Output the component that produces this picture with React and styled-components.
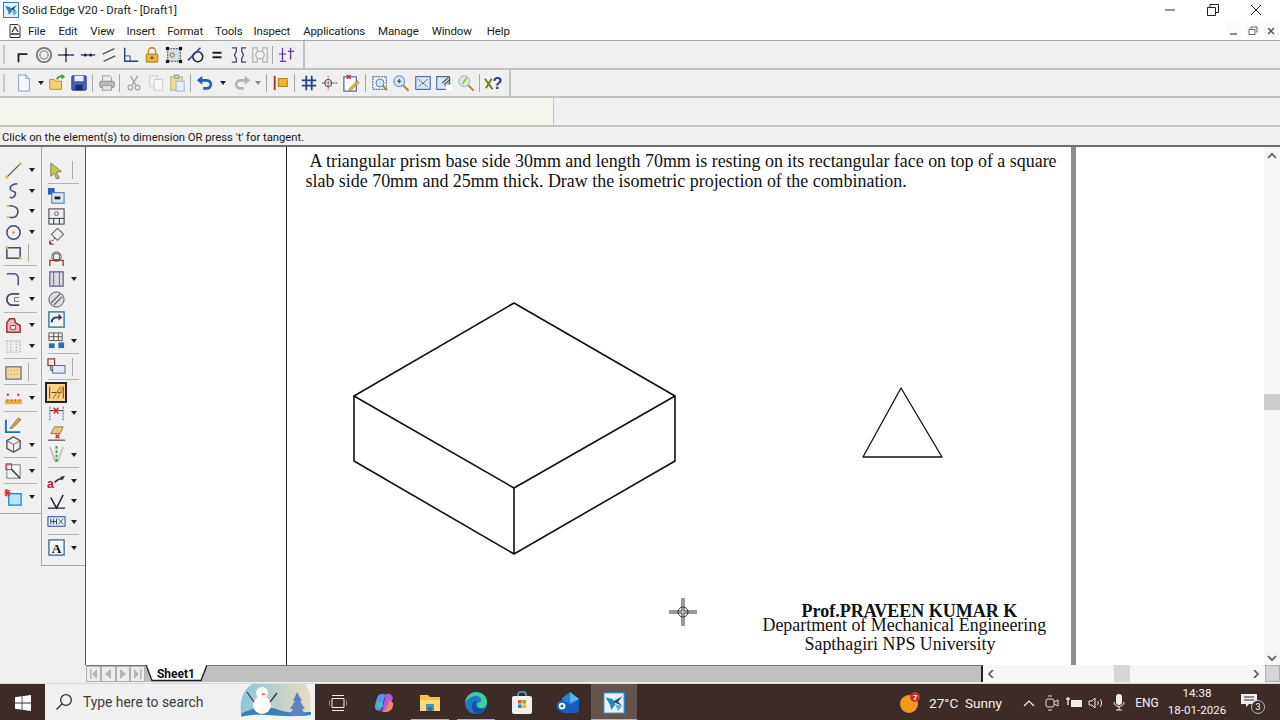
import React from 'react';
import styled, { createGlobalStyle } from 'styled-components';

const Global = createGlobalStyle`
  html, body { margin: 0; padding: 0; background: #f0f0f0; }
  #root { width: 1280px; height: 720px; overflow: hidden; }
  * { box-sizing: border-box; }
`;

const Page = styled.div`
  width: 1280px;
  height: 720px;
  display: flex;
  flex-direction: column;
  font-family: Roboto, "Noto Sans", sans-serif;
  color: #1c1c1c;
  background: #f0f0f0;
`;

const TitleBar = styled.div`
  height: 20px;
  background: #fff;
  display: flex;
  align-items: center;
  padding: 0 2.5px 0 3px;
  font-size: 11.3px;
  flex: none;
`;

const TitleText = styled.span`
  margin-left: 3px;
  flex: 1;
`;

const WinBtn = styled.div`
  width: 43px;
  height: 20px;
  display: flex;
  align-items: center;
  justify-content: center;
`;

const MenuBar = styled.div`
  height: 21px;
  background: #fff;
  border-bottom: 1px solid #a8a8a8;
  display: flex;
  align-items: center;
  padding: 1px 1px 0 7px;
  font-size: 11.5px;
  letter-spacing: -0.15px;
  flex: none;
`;

const DocGlyph = styled.svg`
  margin-right: 5px;
`;

const MenuItem = styled.span`
  margin-right: ${p => p.$gap}px;
`;

const MenuSpacer = styled.div`
  flex: 1;
`;

const DocBtn = styled.div`
  width: 16px;
  height: 17px;
  margin-left: 2.5px;
  background: #fbfbfb;
  display: flex;
  align-items: center;
  justify-content: center;
`;

const ToolRow = styled.div`
  height: ${p => p.$h}px;
  background: #f0f0f0;
  border-bottom: 2px solid #c4c4c4;
  flex: none;
  display: flex;
`;

const ToolGroup = styled.div`
  width: ${p => p.$w}px;
  height: 100%;
  display: flex;
  align-items: center;
  padding-left: ${p => p.$pad}px;
  border-right: 2px solid #c4c4c4;
  position: relative;
`;

const Grip = styled.div`
  position: absolute;
  left: 3px;
  top: 4px;
  bottom: 4px;
  width: 2px;
  background: #c8c8c8;
`;

const Btn = styled.div`
  width: ${p => p.$w || 21.6}px;
  height: 22px;
  flex: none;
  display: flex;
  align-items: center;
  justify-content: center;
`;

const Caret = styled.div`
  width: 0;
  height: 0;
  border-left: 3.5px solid transparent;
  border-right: 3.5px solid transparent;
  border-top: 4px solid ${p => p.$off ? '#8a8a8a' : '#222'};
`;

const CaretBtn = styled.div`
  width: ${p => p.$w || 12}px;
  height: 22px;
  flex: none;
  display: flex;
  align-items: center;
  justify-content: center;
`;

const VSep = styled.div`
  width: ${p => p.$w || 6}px;
  height: 20px;
  flex: none;
  position: relative;
  &::after {
    content: '';
    position: absolute;
    left: ${p => p.$at ?? 2}px;
    top: 1px;
    bottom: 1px;
    width: 1px;
    background: #a9a9a9;
  }
`;

const RibbonRow = styled.div`
  height: 29px;
  flex: none;
  background: #f0f0f0;
  border-bottom: 2px solid #c4c4c4;
`;

const RibbonField = styled.div`
  width: 554px;
  height: 100%;
  background: #f6f6ef;
  border-right: 1px solid #c4c4c4;
`;

const PromptBar = styled.div`
  height: 20px;
  flex: none;
  padding: 3px 0 0 2px;
  font-size: 11.25px;
  line-height: 15px;
  color: #1a1a1a;
  background: #f1f1f1;
  border-bottom: 2px solid #6e6e6e;
`;

const Main = styled.div`
  height: 518px;
  flex: none;
  display: flex;
`;

const Side = styled.div`
  width: 86px;
  flex: none;
  display: flex;
  align-items: flex-start;
  background: #f0f0f0;
  border-right: 1px solid #555;
`;

const DockCol = styled.div`
  width: ${p => p.$w}px;
  height: ${p => p.$h}px;
  padding-top: 13px;
  flex: none;
  border-left: ${p => p.$line ? '1px solid #a8a8a8' : 'none'};
  border-bottom: 1px solid #a8a8a8;
`;

const DockRow = styled.div`
  height: 20.6px;
  display: flex;
  align-items: center;
  padding-left: ${p => p.$pad}px;
`;

const DockIcon = styled.div`
  width: ${p => p.$w}px;
  height: 20px;
  flex: none;
  display: flex;
  align-items: center;
  justify-content: center;
`;

const ActiveIcon = styled(DockIcon)`
  background: #fbd48a;
  border: 2px solid #222;
  height: 21px;
`;

const DockRule = styled.div`
  height: 5.5px;
  margin: 0 ${p => p.$m}px;
  position: relative;
  &::after {
    content: '';
    position: absolute;
    left: 0;
    right: 0;
    top: 2px;
    height: 1px;
    background: #b4b4b4;
  }
`;

const Viewport = styled.div`
  flex: 1;
  background: #fff;
  display: flex;
  padding-left: 199.5px;
`;

const Sheet = styled.div`
  width: 790.5px;
  height: 100%;
  flex: none;
  background: #fff;
  border-left: 1.5px solid #222;
  border-right: 5px solid #8e8e8e;
  position: relative;
  font-family: "Liberation Serif", serif;
  color: #111;
`;

const Question = styled.div`
  padding: 4px 0 0 19px;
  font-size: 17.93px;
  line-height: 20px;
  white-space: nowrap;
`;

const QuestionLine = styled.div`
  margin-left: ${p => p.$indent || 0}px;
`;

const Drawing = styled.svg`
  position: absolute;
  left: 0;
  top: 0;
`;

const Credit = styled.div`
  position: absolute;
  left: ${p => p.$x}px;
  top: ${p => p.$y}px;
  font-size: ${p => p.$size}px;
  font-weight: ${p => p.$bold ? 700 : 400};
  line-height: 20px;
  white-space: nowrap;
`;

const VScroll = styled.div`
  width: 16px;
  flex: none;
  margin-left: auto;
  background: #f6f6f6;
  display: flex;
  flex-direction: column;
  align-items: center;
  padding-top: 2px;
`;

const ScrollCap = styled.div`
  height: 14px;
  flex: none;
  display: flex;
  align-items: center;
  justify-content: center;
`;

const VThumbTrack = styled.div`
  flex: 1;
  width: 100%;
  padding-top: 231px;
`;

const VThumb = styled.div`
  width: 100%;
  height: 16px;
  background: #cdcdcd;
`;

const TabRow = styled.div`
  height: 17px;
  flex: none;
  display: flex;
  background: #f0f0f0;
`;

const TabNav = styled.div`
  margin-left: 86px;
  width: 59px;
  display: flex;
  background: #c6c6c6;
  border-top: 1px solid #777;
`;

const NavBtn = styled.div`
  flex: 1;
  background: #ececec;
  border: 1px solid #b0b0b0;
  display: flex;
  align-items: center;
  justify-content: center;
`;

const SheetTab = styled.div`
  width: 62px;
  flex: none;
  font-size: 12px;
  font-weight: 700;
  display: flex;
  justify-content: center;
  align-items: center;
  color: #111;
  position: relative;
  background: #c0c0c0;
  span { position: relative; }
`;

const TabShape = styled.svg`
  position: absolute;
  left: 0;
  top: 0;
`;

const TabFill = styled.div`
  flex: 1;
  background: #c0c0c0;
  border-top: 1px solid #777;
  border-right: 2px solid #222;
`;

const HScroll = styled.div`
  width: 282px;
  flex: none;
  display: flex;
  align-items: center;
  justify-content: space-between;
  background: #f6f6f6;
  padding: 0 4px;
  position: relative;
`;

const HThumb = styled.div`
  position: absolute;
  left: 131px;
  top: 0;
  width: 16px;
  height: 100%;
  background: #d6d6d6;
`;

const Corner = styled.div`
  width: 15px;
  flex: none;
  background: #d4d4d4;
  border: 1px solid #b0b0b0;
`;

const Taskbar = styled.div`
  height: 38px;
  flex: none;
  margin-top: 1px;
  background: #3d2b28;
  color: #f2f2f2;
  display: flex;
  align-items: stretch;
  border-top: 1px solid #d8d8d8;
`;

const StartBtn = styled.div`
  width: 45px;
  flex: none;
  display: flex;
  align-items: center;
  justify-content: center;
`;

const SearchBox = styled.div`
  width: 270px;
  flex: none;
  background: #f1f1f1;
  color: #3c3c3c;
  font-size: 13.85px;
  display: flex;
  align-items: center;
  padding: 0 0 1px 10px;
  position: relative;
`;

const SearchLabel = styled.span`
  margin-left: 10px;
`;

const SearchArt = styled.svg`
  position: absolute;
  right: 2px;
  top: 0;
`;

const TaskApps = styled.div`
  display: flex;
  flex: 1;
`;

const TaskApp = styled.div`
  width: 46px;
  flex: none;
  display: flex;
  align-items: center;
  justify-content: center;
  position: relative;
  background: ${p => p.$active ? '#645450' : 'transparent'};
  &::after {
    content: '';
    display: ${p => p.$open ? 'block' : 'none'};
    position: absolute;
    left: ${p => p.$active ? 0 : 4}px;
    right: ${p => p.$active ? 0 : 4}px;
    bottom: 0;
    height: 2px;
    background: #8fbbe0;
  }
`;

const Tray = styled.div`
  display: flex;
  align-items: center;
  font-size: 12px;
  flex: none;
`;

const WeatherText = styled.span`
  font-size: 13.6px;
  width: 72px;
  margin: 0 17px 0 8px;
  white-space: pre;
`;

const TrayIcon = styled.div`
  width: 22.4px;
  display: flex;
  justify-content: center;
`;

const Lang = styled.span`
  width: 34px;
  text-align: center;
  font-size: 12px;
`;

const Clock = styled.div`
  width: 66px;
  margin-right: 2px;
  padding-bottom: 1px;
  font-size: 11.6px;
  line-height: 17px;
  text-align: center;
`;

const Notify = styled.div`
  width: 48px;
  padding-left: 9px;
  position: relative;
`;

const NotifyBadge = styled.span`
  position: absolute;
  left: 19px;
  top: 7px;
  width: 14px;
  height: 14px;
  border-radius: 50%;
  background: #3d2b28;
  border: 1px solid #bbb;
  font-size: 9px;
  line-height: 12px;
  text-align: center;
  color: #fff;
`;

const Svg = ({ s = 18, children }) => (
  <svg width={s} height={s} viewBox="0 0 20 20" fill="none">{children}</svg>
);

const navy = '#25418c';
const gold = '#e9b23e';

// toolbar + dock drawings, all on a 20x20 grid
const icons = {
  corner: <path d="M5 18V9h10" stroke="#222" strokeWidth="2" />,
  rings: <><circle cx="10" cy="10" r="8" stroke="#777" strokeWidth="2" /><circle cx="10" cy="10" r="4.5" stroke="#aaa" strokeWidth="2" /></>,
  cross: <><path d="M1 10h18" stroke={navy} strokeWidth="1.6" /><path d="M10 2v16" stroke="#222" strokeWidth="1.4" /><circle cx="10" cy="10" r="1.5" fill="#222" /></>,
  dots: <><path d="M2 10h16" stroke={navy} strokeWidth="1.5" /><circle cx="7" cy="10" r="1.7" fill="#222" /><circle cx="13" cy="10" r="1.7" fill="#222" /></>,
  slashes: <path d="M3 9l13-6M4 17l13-6" stroke="#555" strokeWidth="1.6" />,
  angle: <><path d="M3 2v15h15" stroke={navy} strokeWidth="1.6" /><path d="M3 11h6v6" stroke="#444" /></>,
  lock: <><path d="M6 9V6a4 4 0 018 0v3" stroke="#b98b23" strokeWidth="1.6" /><rect x="3.5" y="9" width="13" height="9" rx="1" fill={gold} stroke="#a67b1c" /><circle cx="10" cy="13" r="1.4" fill="#6b4a0d" /></>,
  dimBox: <><rect x="3" y="3" width="14" height="14" fill="#cfe0ef" stroke="#333" strokeDasharray="2 1" /><rect x="1" y="1" width="3.5" height="3.5" fill="#111" /><rect x="15.5" y="1" width="3.5" height="3.5" fill="#111" /><rect x="1" y="15.5" width="3.5" height="3.5" fill="#111" /><rect x="15.5" y="15.5" width="3.5" height="3.5" fill="#111" /><circle cx="8" cy="10" r="2.4" stroke="#b3561b" /></>,
  tangent: <><circle cx="12" cy="12" r="5.5" stroke="#222" strokeWidth="1.7" /><path d="M1 16L15 2" stroke={navy} strokeWidth="1.7" /></>,
  equal: <path d="M5 7.5h10M5 12.5h10" stroke="#222" strokeWidth="2.4" />,
  sym: <path d="M2 2h5v4l-2 4 2 4v4H2M18 2h-5v4l2 4-2 4v4h5" stroke="#3b4a62" strokeWidth="1.4" />,
  symOff: <path d="M2 2h5v4l-2 4 2 4v4H2zM18 2h-5v4l2 4-2 4v4h5zM7 6h6M7 14h6" stroke="#b4b4b4" strokeWidth="1.4" />,
  align: <><path d="M5 2v15M2 17h7M14 2v13M11 6h7" stroke="#6a3aa8" strokeWidth="1.5" /><path d="M1 9h8" stroke={navy} /></>,
  newDoc: <><path d="M4 1h8l4 4v14H4z" fill="#f4f8fd" stroke="#7f9cc0" /><path d="M12 1v4h4" stroke="#7f9cc0" /></>,
  open: <><path d="M2 17V6h5l2 2h6v9z" fill="#f1d272" stroke="#b08a2c" /><path d="M10 6c1-3 4-4 7-3" stroke="#3c9a3c" strokeWidth="2" /><path d="M15 0l4 3-4 3z" fill="#3c9a3c" /></>,
  save: <><rect x="2" y="2" width="16" height="16" rx="1" fill="#4a5fb3" stroke="#2b3a80" /><rect x="5" y="2" width="10" height="6" fill="#e8eefc" /><rect x="6" y="12" width="8" height="6" fill="#1f2c66" /></>,
  print: <><path d="M5 8V2h8l2 2v4" fill="#eee" stroke="#999" /><rect x="2" y="8" width="16" height="7" rx="1" fill="#bbb" stroke="#888" /><rect x="5" y="13" width="10" height="5" fill="#e6e6e6" stroke="#999" /></>,
  cut: <><path d="M6 2l6 10M14 2L8 12" stroke="#a6a6a6" strokeWidth="1.6" /><circle cx="6" cy="15" r="2.6" stroke="#a6a6a6" strokeWidth="1.4" /><circle cx="14" cy="15" r="2.6" stroke="#a6a6a6" strokeWidth="1.4" /></>,
  copy: <><rect x="3" y="2" width="9" height="12" fill="#f3f3f3" stroke="#c8c8c8" /><rect x="8" y="6" width="9" height="12" fill="#f8f8f8" stroke="#c8c8c8" /></>,
  paste: <><rect x="3" y="3" width="13" height="15" fill="#eddc9c" stroke="#b9ad80" /><rect x="7" y="1" width="5" height="4" fill="#ccc" stroke="#999" /><rect x="9" y="8" width="9" height="11" fill="#e4edf8" stroke="#a3b3c8" /></>,
  undo: <><path d="M5 7h7a4 4 0 010 9H8" stroke="#1f5fbf" strokeWidth="3" /><path d="M1 7l6-5v10z" fill="#1f5fbf" /></>,
  redo: <><path d="M15 7H8a4 4 0 000 9h4" stroke="#b2b2b2" strokeWidth="3" /><path d="M19 7l-6-5v10z" fill="#b2b2b2" /></>,
  flag: <><path d="M3 2v16" stroke="#a83030" strokeWidth="2" /><rect x="7" y="5" width="10" height="9" fill="#f2b32e" stroke="#b07a12" /></>,
  grid: <path d="M7 2v16M13 2v16M2 7h16M2 13h16" stroke="#25418c" strokeWidth="2" />,
  target: <><circle cx="8" cy="10" r="4" stroke="#333" /><path d="M8 2v16" stroke="#c43030" strokeDasharray="2 1" /><path d="M1 10h18" stroke="#333" strokeDasharray="2 1" /></>,
  pencilSheet: <><rect x="2" y="3" width="13" height="15" fill="#fff" stroke={navy} /><path d="M5 1l4 4M9 1L5 5" stroke="#d22" strokeWidth="1.6" /><path d="M7 16l9-9 2 2-9 9z" fill="#e8b04a" stroke="#8a5b16" strokeWidth=".6" /></>,
  zoomArea: <><rect x="2" y="3" width="15" height="14" stroke="#25418c" strokeDasharray="2 1" /><circle cx="10" cy="10" r="4.4" fill="#d4e7f5" stroke="#4d7ba6" /><path d="M13 13l5 5" stroke="#b8863a" strokeWidth="2" /></>,
  zoom: <><circle cx="8" cy="8" r="6" fill="#d4e7f5" stroke="#4d7ba6" /><path d="M5.5 8h5M8 5.5v5" stroke="#333" /><path d="M12.5 12.5l6 6" stroke="#b8863a" strokeWidth="2.4" /></>,
  fit: <><rect x="2" y="3" width="16" height="14" fill="#dbe8f4" stroke={navy} /><path d="M5 6l10 8M15 6L5 14" stroke="#333" strokeDasharray="2 1" /></>,
  pan: <><rect x="2" y="3" width="14" height="14" fill="#dbe8f4" stroke={navy} /><path d="M8 10l7-6M10 12l7-6M11 14l6-4" stroke="#556" strokeWidth="1.4" /><circle cx="15" cy="15" r="3.5" fill="#fff" /></>,
  spin: <><circle cx="8" cy="8" r="6" fill="#dbe8ea" stroke="#8aa" /><path d="M6 11l5-7" stroke="#9bc23a" strokeWidth="2" /><path d="M12.5 12.5l6 6" stroke="#b8863a" strokeWidth="2.2" /></>,
  help: <><path d="M1 5l8 11M8 5l-6 10" stroke="#6b7a1e" strokeWidth="2" /><text x="9" y="16" fontFamily="Liberation Sans" fontWeight="700" fontSize="17" fill={navy}>?</text></>,
  line: <><path d="M3 17L17 3" stroke="#555" strokeWidth="1.4" /><rect x="1.5" y="15.5" width="3" height="3" fill={gold} /><rect x="15.5" y="1.5" width="3" height="3" fill={gold} /></>,
  curve: <path d="M14 3c-5 0-9 3-7 6s6 1 5 5-4 4-6 3" stroke="#4a4a6a" strokeWidth="1.6" />,
  arc: <><path d="M5 4c8-1 11 4 9 9-1 3-5 4-8 3" stroke="#4a4a6a" strokeWidth="1.6" /><path d="M3 4h3" stroke={gold} strokeWidth="2" /><path d="M3 16h3" stroke={gold} strokeWidth="2" /></>,
  circle: <><circle cx="10" cy="10" r="7" stroke="#4a4a6a" strokeWidth="1.6" /><circle cx="10" cy="10" r="1.3" fill="#c98a2a" /></>,
  rect: <><rect x="3" y="5" width="14" height="11" stroke="#4a4a6a" strokeWidth="1.6" /><rect x="1.5" y="3.5" width="3" height="3" fill={gold} /><rect x="15.5" y="14.5" width="3" height="3" fill={gold} /></>,
  fillet: <path d="M3 5h7c3 0 5 2 5 5v7" stroke="#5b4a9a" strokeWidth="1.6" />,
  offset: <><path d="M16 4H9a6 6 0 000 12h7" stroke="#3a4a6a" strokeWidth="1.8" /><path d="M16 8h-5v4h5" stroke="#777" /></>,
  fillArea: <><path d="M3 17V7l3-4h5l1 4 5 3v7z" fill="#efb9b9" stroke="#a02f3f" strokeWidth="1.6" /><path d="M7 14V10h5v4z" fill="#fff" stroke="#a02f3f" /></>,
  dotted: <path d="M3 4h14v12H3zM7 4v12M13 4v12" stroke="#b9b9b9" strokeDasharray="1.5 1.5" strokeWidth="1.4" />,
  hatch: <><rect x="2" y="4" width="16" height="13" fill="#f1d79f" stroke="#6b7b8c" strokeWidth="1.4" /><path d="M4 8h12M4 12h12" stroke="#d9a85a" strokeDasharray="1.5 1.5" /></>,
  ruler: <><rect x="1" y="11" width="18" height="5" fill={gold} /><path d="M4 11v2M8 11v2M12 11v2M16 11v2" stroke="#8a5b16" /><path d="M4 5v2M15 5v2" stroke="#d22" strokeWidth="2" /></>,
  sheetBrush: <><path d="M2 5v13h15" stroke="#1f6fbf" strokeWidth="2" /><path d="M6 14l9-11 3 2-9 9z" fill="#cfa34a" stroke="#555" strokeWidth=".6" /></>,
  cube: <><path d="M10 2l7 4v8l-7 4-7-4V6z" stroke="#4a5a6a" strokeWidth="1.5" /><path d="M3 6l7 4 7-4M10 10v8" stroke="#b24040" /></>,
  arrowBox: <><rect x="3" y="3" width="14" height="14" fill="#f6f6f6" stroke="#777" /><rect x="2" y="2" width="6" height="6" stroke="#b03030" /><path d="M8 8l9 9" stroke="#334" strokeWidth="1.5" /></>,
  starBox: <><rect x="5" y="6" width="13" height="12" fill="#bfe3f5" stroke="#1a8bc0" strokeWidth="1.4" /><path d="M3 1v8M0 5h7M1 2l5 6M6 2L1 8" stroke="#d22" strokeWidth="1.3" /></>,
  pointer: <path d="M4 2l11 9-5 1 3 6-3 1-2-6-4 3z" fill="#c8c840" stroke="#666" strokeWidth=".8" />,
  linkBox: <><rect x="1" y="1" width="7" height="7" fill="#2f5fb0" /><rect x="5" y="6" width="13" height="11" fill="#d6e6f5" stroke="#4a6a9a" /><rect x="8" y="10" width="6" height="3" fill="#222" /></>,
  sheetRow: <><rect x="2" y="2" width="16" height="16" fill="#e9f0f8" stroke="#333" /><path d="M2 12h16M7 12v6M13 12v6" stroke="#333" /><circle cx="10" cy="7" r="2" stroke="#b04040" /></>,
  breakLine: <><path d="M3 16L16 3" stroke="#b03030" strokeWidth="1.3" strokeDasharray="2 1" /><rect x="7" y="2" width="9" height="9" transform="rotate(45 11 6)" fill="#eee" stroke="#555" /><path d="M3 13v4h4" stroke="#222" /></>,
  section: <><path d="M3 18v-6h14v6" stroke="#b03030" strokeWidth="1.4" /><circle cx="10" cy="8" r="5" stroke="#555" /><rect x="7" y="5" width="6" height="6" stroke="#555" /></>,
  hatched: <><rect x="3" y="3" width="14" height="15" fill="#ddd" stroke="#5a5a9a" strokeWidth="1.3" /><path d="M7 3v15M13 3v15" stroke="#5a5a9a" /></>,
  disk: <><circle cx="10" cy="10" r="8" fill="#ddd" stroke="#556" /><path d="M4 14L14 4M7 16L16 7" stroke="#667" strokeWidth="1.3" /></>,
  refresh: <><rect x="2" y="2" width="16" height="16" fill="#eef4f6" stroke="#2f6f8f" strokeWidth="1.4" /><path d="M5 13c0-4 3-6 7-5" stroke="#334" strokeWidth="2" /><path d="M12 4l4 4-4 3z" fill="#334" /></>,
  table: <><path d="M2 2h14v8H2zM2 6h14M7 2v8M12 2v8" stroke="#555" /><rect x="2" y="13" width="6" height="5" fill="#2f6fb0" /><rect x="12" y="12" width="6" height="6" fill="#2f6fb0" /></>,
  linkOut: <><rect x="1" y="2" width="7" height="7" stroke="#a83030" strokeWidth="1.3" /><rect x="6" y="9" width="13" height="8" fill="#e0ecf6" stroke="#4a6a9a" /><path d="M4 9v5h2" stroke="#333" /></>,
  dimHot: <><path d="M2 3v14M18 3v14" stroke="#333" /><path d="M4 10h12" stroke="#333" /><path d="M15 3L6 17M18 3l-7 14" stroke="#c98020" strokeWidth="1.6" /></>,
  dimRed: <><path d="M3 3v14M17 3v14" stroke="#6f93b5" strokeDasharray="2 1" strokeWidth="1.5" /><path d="M3 7h14" stroke="#333" /><path d="M7 4l5 6M12 4l-5 6" stroke="#d22" strokeWidth="1.5" /></>,
  dimHatch: <><path d="M4 10l4-7h9l-3 7z" fill="#e0c48a" stroke="#8a7a4a" /><path d="M9 11l4 4M13 11l-4 4" stroke="#d22" strokeWidth="1.4" /><path d="M1 17h18" stroke="#223" /></>,
  centre: <><path d="M3 2l6 16M17 2l-6 16" stroke="#b6b6b6" strokeWidth="1.5" /><path d="M10 1v18" stroke="#3a9a3a" strokeDasharray="3 1.5" strokeWidth="2" /></>,
  leader: <><text x="0" y="18" fontFamily="Liberation Sans" fontSize="13" fontWeight="700" fill="#b01d3a">a</text><path d="M8 12c3-3 5-4 8-4" stroke="#334" strokeWidth="1.6" /><path d="M19 5l-5 1 2 4z" fill="#334" /></>,
  weld: <path d="M1 17h18M4 6l6 11 7-14" stroke="#223" strokeWidth="1.5" />,
  frame: <><rect x="1" y="5" width="18" height="10" fill="#e6f0f8" stroke={navy} /><path d="M4 7v6M7 7v6M10 7v6M4 10h6" stroke={navy} /><path d="M12 7l5 6M17 7l-5 6" stroke="#556" /></>,
  textA: <><rect x="2" y="2" width="16" height="16" fill="#f5f9fc" stroke="#2f5f8f" strokeWidth="1.3" /><text x="5" y="15.5" fontFamily="Liberation Serif" fontSize="14" fontWeight="700" fill="#111">A</text></>,
};

const row1 = ['corner', 'rings', 'cross', 'dots', 'slashes', 'angle', 'lock', 'dimBox', 'tangent', 'equal', 'sym', 'symOff'];

const left = [
  ['line', 1], ['curve', 1], ['arc', 1], ['circle', 1], ['rect', 2], 'rule',
  ['fillet', 1], ['offset', 1], 'rule',
  ['fillArea', 1], ['dotted', 1], 'rule',
  ['hatch', 2], 'rule',
  ['ruler', 1], 'rule',
  ['sheetBrush', 0], ['cube', 1], 'rule',
  ['arrowBox', 1], 'rule',
  ['starBox', 1],
];

const right = [
  ['pointer', 2], 'rule',
  ['linkBox', 0], ['sheetRow', 0], ['breakLine', 0], ['section', 0], ['hatched', 1], ['disk', 0], ['refresh', 0], ['table', 1], 'rule',
  ['linkOut', 2], 'rule',
  ['dimHot', 0, true], ['dimRed', 1], ['dimHatch', 0], ['centre', 1], 'rule',
  ['leader', 1], ['weld', 1], ['frame', 1], 'rule',
  ['textA', 1],
];

const Dock = ({ items, iconW, pad, m }) => items.map((it, i) => {
  if (it === 'rule') return <DockRule key={i} $m={m} />;
  const [name, after, active] = it;
  const Box = active ? ActiveIcon : DockIcon;
  return (
    <DockRow key={i} $pad={pad}>
      <Box $w={iconW}><Svg s={active ? 17 : 19}>{icons[name]}</Svg></Box>
      {after === 1 && <CaretBtn $w={iconW === 22 ? 13 : 15}><Caret /></CaretBtn>}
      {after === 2 && <VSep $w={10} $at={iconW === 22 ? 5 : 4} />}
    </DockRow>
  );
});

const Chevron = ({ dir }) => {
  const d = { up: 'M1 6l4-4 4 4', down: 'M1 2l4 4 4-4', left: 'M6 0L2 4l4 4', right: 'M3 0l4 4-4 4' }[dir];
  return <svg width="10" height="8" viewBox="0 0 10 8" fill="none"><path d={d} stroke="#555" strokeWidth="1.6" /></svg>;
};

const SolidEdgeLogo = ({ s = 16 }) => (
  <svg width={s} height={s} viewBox="0 0 16 16">
    <rect x=".5" y=".5" width="15" height="15" fill="#e8f2f8" stroke="#2d7fb8" />
    <path d="M2 4l5 1 2 4-3 4-1-4z" fill="#1e88c7" />
    <path d="M14 3L7 7l7 3-3-3z" fill="#16517c" />
    <path d="M9 9l5 1-3 4z" fill="#5fb2e0" />
  </svg>
);

const Nav = ({ d }) => (
  <svg width="8" height="10" viewBox="0 0 8 10"><path d={d} fill="#b4b4b4" /></svg>
);

export default function App() {
  return (
    <Page>
      <Global />
      <TitleBar>
        <SolidEdgeLogo />
        <TitleText>Solid Edge V20 - Draft - [Draft1]</TitleText>
        <WinBtn><svg width="12" height="12"><path d="M1 6h10" stroke="#333" /></svg></WinBtn>
        <WinBtn><svg width="12" height="12" fill="none"><path d="M.5 3.5h8v8h-8zM3 3V.5h8.5v8H9" stroke="#222" /></svg></WinBtn>
        <WinBtn><svg width="12" height="12"><path d="M1 1l10 10M11 1L1 11" stroke="#222" /></svg></WinBtn>
      </TitleBar>
      <MenuBar>
        <DocGlyph width="16" height="16" viewBox="0 0 16 16" fill="none">
          <path d="M3 1.5h8l2 2v11H3z" stroke="#333" /><path d="M5 9l3-5 3 5M3.5 11h9" stroke="#333" strokeWidth="1.3" />
        </DocGlyph>
        <MenuItem $gap={13}>File</MenuItem>
        <MenuItem $gap={13}>Edit</MenuItem>
        <MenuItem $gap={12}>View</MenuItem>
        <MenuItem $gap={12}>Insert</MenuItem>
        <MenuItem $gap={12}>Format</MenuItem>
        <MenuItem $gap={11}>Tools</MenuItem>
        <MenuItem $gap={13}>Inspect</MenuItem>
        <MenuItem $gap={13}>Applications</MenuItem>
        <MenuItem $gap={13}>Manage</MenuItem>
        <MenuItem $gap={15}>Window</MenuItem>
        <MenuItem $gap={0}>Help</MenuItem>
        <MenuSpacer />
        <DocBtn><svg width="10" height="10"><path d="M1 8h7" stroke="#666" strokeWidth="1.5" /></svg></DocBtn>
        <DocBtn><svg width="10" height="10" fill="none"><path d="M1 3.5h6v5H1zM3 3V1h6v5H8" stroke="#666" /></svg></DocBtn>
        <DocBtn><svg width="10" height="10"><path d="M2 2l6 6M8 2L2 8" stroke="#555" strokeWidth="1.5" /></svg></DocBtn>
      </MenuBar>
      <ToolRow $h={29}>
        <ToolGroup $w={305} $pad={12}>
          <Grip />
          {row1.map(n => <Btn key={n}><Svg s={18}>{icons[n]}</Svg></Btn>)}
          <VSep $w={6} $at={1} />
          <Btn $w={20}><Svg s={18}>{icons.align}</Svg></Btn>
        </ToolGroup>
      </ToolRow>
      <ToolRow $h={28}>
        <ToolGroup $w={511} $pad={13}>
          <Grip />
          <Btn><Svg s={18}>{icons.newDoc}</Svg></Btn>
          <CaretBtn><Caret /></CaretBtn>
          <Btn><Svg s={18}>{icons.open}</Svg></Btn>
          <Btn><Svg s={18}>{icons.save}</Svg></Btn>
          <VSep />
          <Btn><Svg s={18}>{icons.print}</Svg></Btn>
          <VSep />
          <Btn><Svg s={18}>{icons.cut}</Svg></Btn>
          <Btn><Svg s={18}>{icons.copy}</Svg></Btn>
          <Btn><Svg s={18}>{icons.paste}</Svg></Btn>
          <VSep />
          <Btn><Svg s={18}>{icons.undo}</Svg></Btn>
          <CaretBtn $w={15}><Caret /></CaretBtn>
          <Btn><Svg s={18}>{icons.redo}</Svg></Btn>
          <CaretBtn><Caret $off /></CaretBtn>
          <VSep />
          <Btn><Svg s={18}>{icons.flag}</Svg></Btn>
          <VSep />
          <Btn><Svg s={18}>{icons.grid}</Svg></Btn>
          <Btn><Svg s={18}>{icons.target}</Svg></Btn>
          <Btn><Svg s={19}>{icons.pencilSheet}</Svg></Btn>
          <VSep />
          <Btn><Svg s={18}>{icons.zoomArea}</Svg></Btn>
          <Btn><Svg s={18}>{icons.zoom}</Svg></Btn>
          <Btn><Svg s={18}>{icons.fit}</Svg></Btn>
          <Btn><Svg s={18}>{icons.pan}</Svg></Btn>
          <Btn><Svg s={18}>{icons.spin}</Svg></Btn>
          <VSep />
          <Btn><Svg s={19}>{icons.help}</Svg></Btn>
        </ToolGroup>
      </ToolRow>
      <RibbonRow><RibbonField /></RibbonRow>
      <PromptBar>Click on the element(s) to dimension OR press 't' for tangent.</PromptBar>
      <Main>
        <Side>
          <DockCol $w={41} $h={367}><Dock items={left} iconW={21} pad={3} m={4} /></DockCol>
          <DockCol $w={44} $h={419} $line><Dock items={right} iconW={22} pad={3} m={6} /></DockCol>
        </Side>
        <Viewport>
          <Sheet>
            <Question>
              <QuestionLine $indent={4}>A triangular prism base side 30mm and length 70mm is resting on its rectangular face on top of a square</QuestionLine>
              <QuestionLine>slab side 70mm and 25mm thick. Draw the isometric projection of the combination.</QuestionLine>
            </Question>
            <Drawing width="785" height="518" viewBox="287 147 785 518" fill="none">
              <g stroke="#111" strokeWidth="1.6" strokeLinejoin="round">
                <path d="M514 303L675 396 514 488 354 396Z" />
                <path d="M354 396V461L514 554 675 461V396M514 488V554" />
                <path d="M901 388L942 457H863Z" strokeWidth="1.3" />
              </g>
              <path d="M669 612h28M683 598v28" stroke="#333" strokeWidth="3" />
              <path d="M669 612h28M683 598v28" stroke="#fff" strokeWidth="1" />
              <circle cx="683" cy="612" r="5" stroke="#333" strokeWidth="1" />
            </Drawing>
            <Credit $x={515} $y={454} $size={18} $bold>Prof.PRAVEEN KUMAR K</Credit>
            <Credit $x={476} $y={468} $size={17.9}>Department of Mechanical Engineering</Credit>
            <Credit $x={518} $y={487} $size={17.9}>Sapthagiri NPS University</Credit>
          </Sheet>
          <VScroll>
            <ScrollCap><Chevron dir="up" /></ScrollCap>
            <VThumbTrack><VThumb /></VThumbTrack>
            <ScrollCap><Chevron dir="down" /></ScrollCap>
          </VScroll>
        </Viewport>
      </Main>
      <TabRow>
        <TabNav>
          <NavBtn><Nav d="M1 0h1.5v10H1zM8 0v10L3 5z" /></NavBtn>
          <NavBtn><Nav d="M7 0v10L1 5z" /></NavBtn>
          <NavBtn><Nav d="M1 0v10l6-5z" /></NavBtn>
          <NavBtn><Nav d="M0 0v10l5-5zM6 0h1.5v10H6z" /></NavBtn>
        </TabNav>
        <SheetTab>
          <TabShape width="62" height="17" viewBox="0 0 62 17">
            <path d="M1 0L7 15.5H56L62 0Z" fill="#fff" />
            <path d="M1 0L7 15.5H56L62 0" fill="none" stroke="#222" strokeWidth="1.4" />
          </TabShape>
          <span>Sheet1</span>
        </SheetTab>
        <TabFill />
        <HScroll>
          <Chevron dir="left" />
          <HThumb />
          <Chevron dir="right" />
        </HScroll>
        <Corner />
      </TabRow>
      <Taskbar>
        <StartBtn>
          <svg width="16" height="16" viewBox="0 0 16 16" fill="#fff">
            <path d="M0 2.2L6.6 1.3V7.6H0zM7.4 1.2L16 0V7.6H7.4zM0 8.4H6.6V14.7L0 13.8zM7.4 8.4H16V16L7.4 14.8z" />
          </svg>
        </StartBtn>
        <SearchBox>
          <svg width="18" height="18" viewBox="0 0 18 18" fill="none">
            <circle cx="11" cy="7" r="5.4" stroke="#333" strokeWidth="1.3" /><path d="M7 11l-5.5 5.5" stroke="#333" strokeWidth="1.5" />
          </svg>
          <SearchLabel>Type here to search</SearchLabel>
          <SearchArt width="74" height="37" viewBox="0 0 74 37">
            <defs>
              <linearGradient id="sky" x1="0" x2="1" y1="0" y2="0">
                <stop offset="0" stopColor="#8ec4dc" /><stop offset="1" stopColor="#e9dcc0" />
              </linearGradient>
            </defs>
            <path d="M4 37C-2 20 4 4 14 0H66C72 6 74 22 70 37Z" fill="url(#sky)" />
            <path d="M2 30c14-8 28-8 38-4s24 2 32 2v9H4z" fill="#3f7fb5" />
            <path d="M2 33c20-6 40 2 70-2v6H4z" fill="#eef6fa" />
            <circle cx="23" cy="21" r="9" fill="#fdfdfd" />
            <circle cx="23" cy="9" r="6" fill="#fdfdfd" />
            <path d="M23 9l5 1.5-5 1z" fill="#e6782a" />
            <path d="M15 18L8 8M31 18l7-9" stroke="#4a3a2a" strokeWidth="1.3" />
            <path d="M58 8l5 9h-2l5 8h-3l4 7H50l4-7h-3l5-8h-2z" fill="#5f82c2" />
          </SearchArt>
        </SearchBox>
        <TaskApps>
          <TaskApp>
            <svg width="18" height="16" viewBox="0 0 18 16" fill="none" stroke="#eee"><path d="M3 3.5h12v9H3zM0 5.5v5M18 5.5v5M3 .5h12M3 15.5h12" /></svg>
          </TaskApp>
          <TaskApp>
            <svg width="22" height="22" viewBox="0 0 22 22">
              <path d="M4 6c1-4 5-5 7-4l2 1c-2 3-3 7-3 11l-3 5C3 19 1 16 2 13z" fill="#5b8ef0" />
              <path d="M13 2c3-1 6 0 7 4l-4 9c-1 3-3 5-5 5l-4-1c2 0 3-2 3-5z" fill="#b25cd9" />
              <path d="M16 9c3 0 5 2 4 5-1 4-4 6-8 6-1 0-2 0-2-1 3 0 4-3 6-10z" fill="#f08a5d" />
              <path d="M4 8c1 3 4 2 6 1l-1 6c-2 1-5 1-6-2z" fill="#3fc4b8" />
            </svg>
          </TaskApp>
          <TaskApp $open>
            <svg width="22" height="20" viewBox="0 0 22 20">
              <path d="M1 2h8l2 2h10v14H1z" fill="#f3c63f" />
              <path d="M1 7h20v11H1z" fill="#f9dc75" />
              <path d="M7 11h8v7h-2v-4H9v4H7z" fill="#4f8fc0" />
              <path d="M9 14h4v4H9z" fill="#3a6f9a" />
            </svg>
          </TaskApp>
          <TaskApp $open>
            <svg width="24" height="24" viewBox="0 0 24 24">
              <circle cx="12" cy="12" r="11" fill="#1f78c8" />
              <path d="M1 12C2 5 7 1 12 1c6 0 11 4 11 10 0 4-3 6-6 6-2 0-4-1-4-3 0-3 5-2 4-6-1-3-4-4-7-3C5 7 2 9 1 12z" fill="#3ecf9a" />
              <path d="M8 15c0-3 2-5 5-5-2 1-2 3-1 5s5 4 9 2c-2 4-6 6-10 5-2-1-3-4-3-7z" fill="#0f4f9c" />
            </svg>
          </TaskApp>
          <TaskApp>
            <svg width="22" height="24" viewBox="0 0 22 24" fill="none">
              <path d="M7 6V3.5A2.5 2.5 0 019.5 1h3A2.5 2.5 0 0115 3.5V6" stroke="#3ab0d8" strokeWidth="1.6" />
              <rect x="1" y="5" width="20" height="18" rx="2" fill="#f3efe9" />
              <rect x="7" y="9" width="3.6" height="3.6" fill="#e8552e" />
              <rect x="11.4" y="9" width="3.6" height="3.6" fill="#7ab51d" />
              <rect x="7" y="13.4" width="3.6" height="3.6" fill="#1e90d8" />
              <rect x="11.4" y="13.4" width="3.6" height="3.6" fill="#f5b81c" />
            </svg>
          </TaskApp>
          <TaskApp>
            <svg width="24" height="24" viewBox="0 0 24 24">
              <path d="M6 7l8-6 9 7v11H6z" fill="#2b7fd6" />
              <path d="M14 1l9 7-9 4z" fill="#57b3ee" />
              <path d="M6 9l9 5 8-6v11c0 2-1 3-3 3H8c-1 0-2-1-2-3z" fill="#1a5cb8" />
              <circle cx="6" cy="15" r="5.5" fill="#1568b8" />
              <circle cx="6" cy="15" r="2.4" fill="none" stroke="#fff" strokeWidth="1.7" />
            </svg>
          </TaskApp>
          <TaskApp $open $active><SolidEdgeLogo s={22} /></TaskApp>
        </TaskApps>
        <Tray>
          <svg width="22" height="22" viewBox="0 0 22 22">
            <circle cx="10" cy="12" r="9" fill="#f29a1c" />
            <circle cx="16" cy="5" r="5" fill="#c9302c" />
            <text x="14" y="8" fontFamily="Liberation Sans" fontSize="8" fontWeight="700" fill="#fff">7</text>
          </svg>
          <WeatherText>27°C  Sunny</WeatherText>
          <TrayIcon><svg width="12" height="8" fill="none"><path d="M1 7l5-5 5 5" stroke="#eee" strokeWidth="1.2" /></svg></TrayIcon>
          <TrayIcon><svg width="14" height="16" viewBox="0 0 14 16" fill="none" stroke="#ddd"><rect x="1" y="4" width="8" height="8" rx="2" /><path d="M9 7l4-2v6l-4-2M3 1h4M3 15h4" /></svg></TrayIcon>
          <TrayIcon><svg width="16" height="12" viewBox="0 0 16 12"><rect x="5" y="3" width="11" height="7" fill="#eee" /><path d="M0 2h4M2 0v4M2 4v4" stroke="#eee" strokeWidth="1.3" /></svg></TrayIcon>
          <TrayIcon><svg width="16" height="14" viewBox="0 0 16 14" fill="none" stroke="#eee"><path d="M1 5h3l3-3v10L4 9H1zM9.5 5c1 1 1 3 0 4M12 3c2 2 2 6 0 8" /></svg></TrayIcon>
          <TrayIcon><svg width="12" height="17" viewBox="0 0 12 17"><rect x="3" y="0" width="6" height="11" rx="3" fill="#eee" /><path d="M1 8c0 6 10 6 10 0M6 13v3M3 16h6" stroke="#eee" fill="none" /></svg></TrayIcon>
          <Lang>ENG</Lang>
          <Clock>14:38<br />18-01-2026</Clock>
          <Notify>
            <svg width="16" height="16" viewBox="0 0 16 16"><path d="M0 1h16v10H8l-3 3v-3H0z" fill="#eee" /><path d="M3 4h10M3 7h10" stroke="#3d2b28" /></svg>
            <NotifyBadge>3</NotifyBadge>
          </Notify>
        </Tray>
      </Taskbar>
    </Page>
  );
}
